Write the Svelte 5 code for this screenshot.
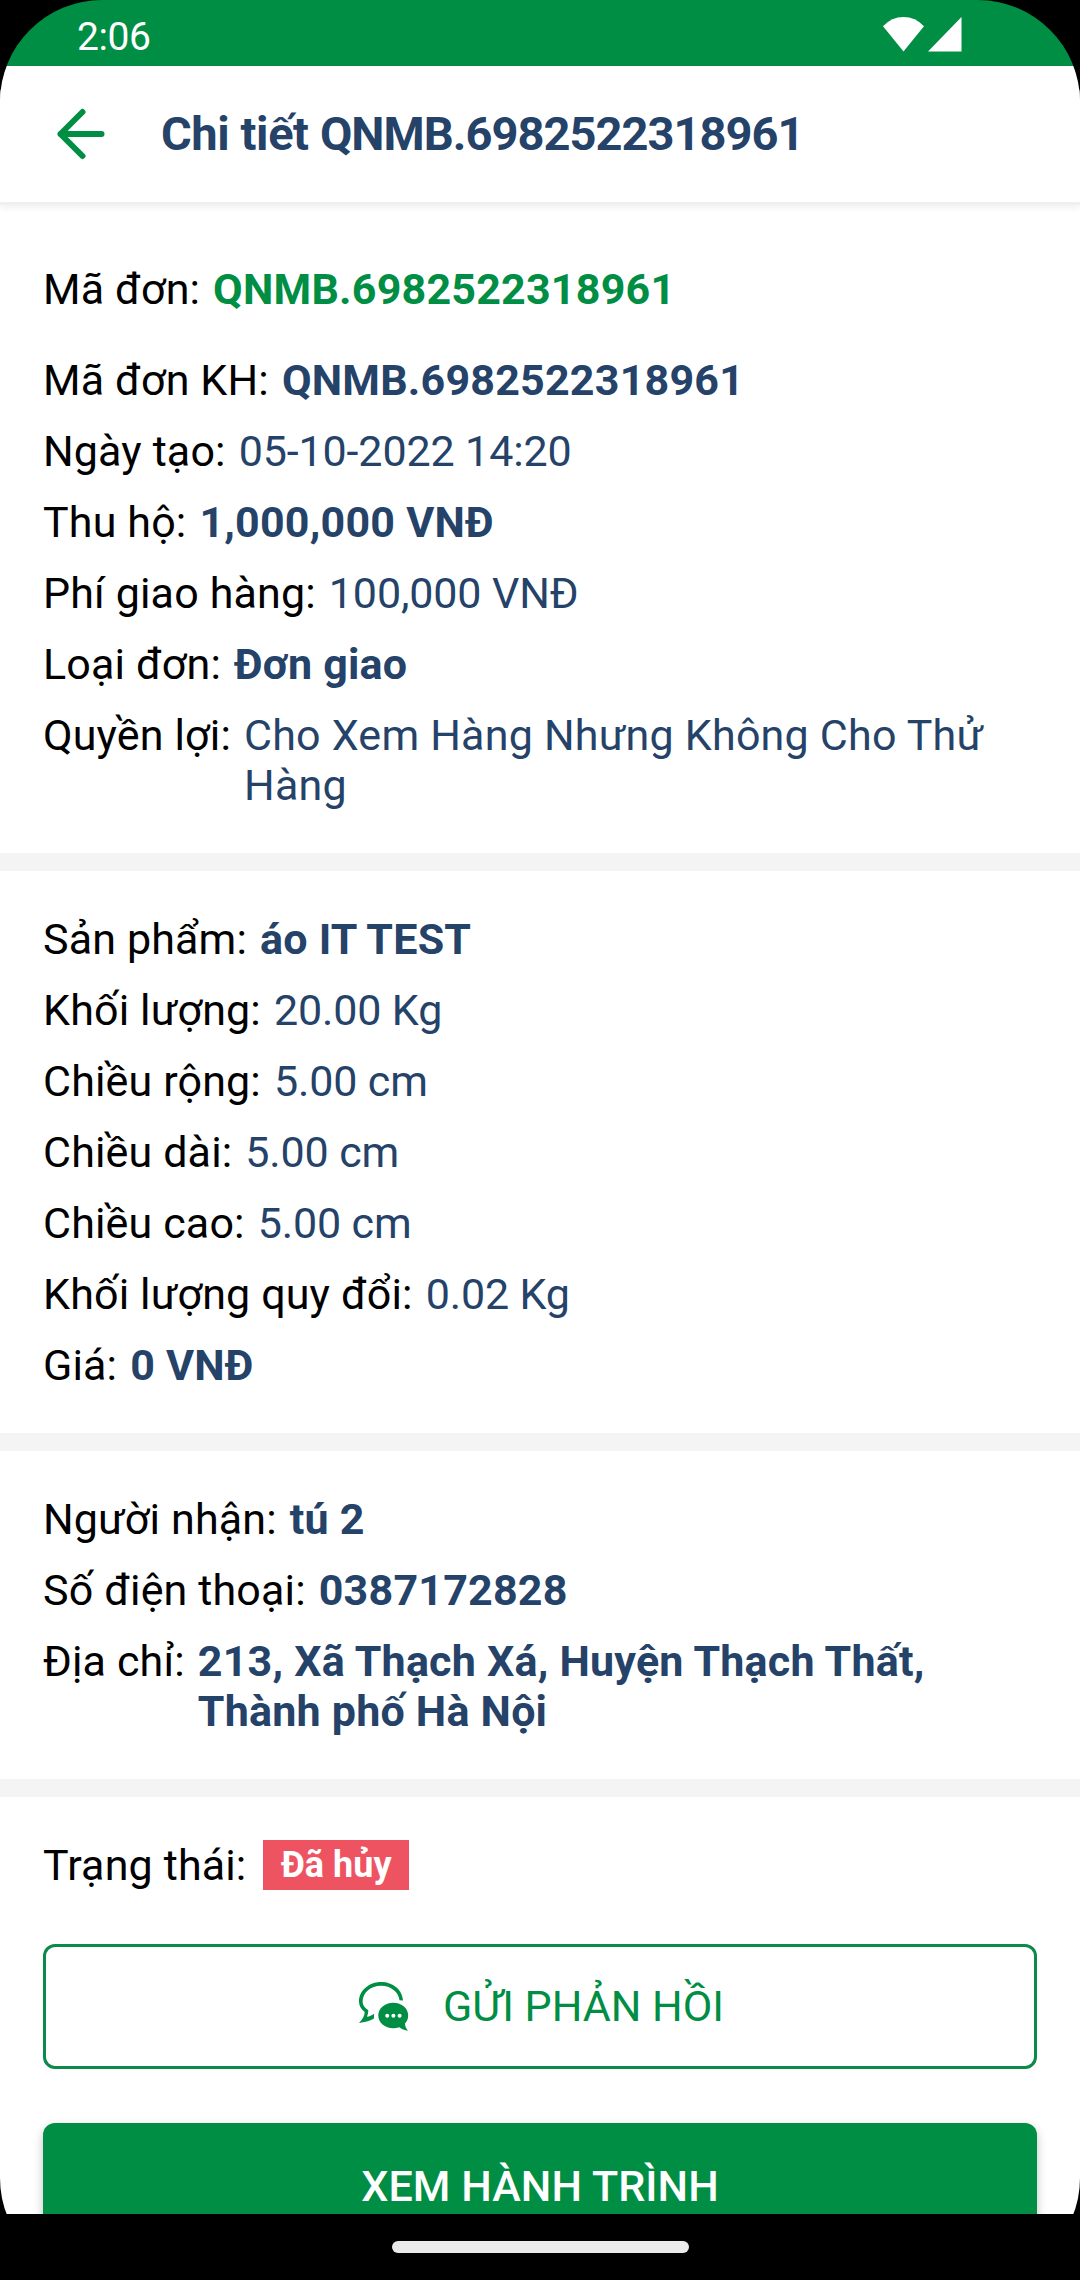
<script>
  const code = 'QNMB.6982522318961';

  const sections = [
    [
      { label: 'Mã đơn:', value: code, bold: true, lead: true },
      { label: 'Mã đơn KH:', value: code, bold: true },
      { label: 'Ngày tạo:', value: '05-10-2022 14:20', numeric: true },
      { label: 'Thu hộ:', value: '1,000,000 VNĐ', bold: true },
      { label: 'Phí giao hàng:', value: '100,000 VNĐ', numeric: true },
      { label: 'Loại đơn:', value: 'Đơn giao', bold: true },
      { label: 'Quyền lợi:', value: 'Cho Xem Hàng Nhưng Không Cho Thử Hàng' }
    ],
    [
      { label: 'Sản phẩm:', value: 'áo IT TEST', bold: true },
      { label: 'Khối lượng:', value: '20.00 Kg', numeric: true },
      { label: 'Chiều rộng:', value: '5.00 cm', numeric: true },
      { label: 'Chiều dài:', value: '5.00 cm', numeric: true },
      { label: 'Chiều cao:', value: '5.00 cm', numeric: true },
      { label: 'Khối lượng quy đổi:', value: '0.02 Kg', numeric: true },
      { label: 'Giá:', value: '0 VNĐ', bold: true }
    ],
    [
      { label: 'Người nhận:', value: 'tú 2', bold: true },
      { label: 'Số điện thoại:', value: '0387172828', bold: true },
      { label: 'Địa chỉ:', value: '213, Xã Thạch Xá, Huyện Thạch Thất, Thành phố Hà Nội', bold: true }
    ]
  ];
</script>

<div class="device">
  <div class="screen">
    <div class="status">
      <span class="clock">2:06</span>
      <svg class="signals" width="79" height="36" viewBox="0 0 79 36" fill="#fff">
        <path d="M0 10.2Q8.6 1 20.5 1Q32.4 1 41 10.2L20.5 35.5Z" />
        <path d="M78.5 1V35.5H45Z" />
      </svg>
    </div>

    <header>
      <button class="back" aria-label="Quay lại">
        <svg width="48" height="52" viewBox="0 0 48 52" fill="none" stroke="#008e44" stroke-width="6" stroke-linecap="round" stroke-linejoin="round">
          <path d="M25.5 4L3.5 26L25.5 48M3.5 26H44.5" />
        </svg>
      </button>
      <h1>Chi tiết <span class="code">{code}</span></h1>
    </header>

    <main>
      {#each sections as rows, i}
        <section class:first={i === 0}>
          {#each rows as row}
            <div class="row" class:lead={row.lead}>
              <span class="label">{row.label}</span>
              <span class="value" class:bold={row.bold} class:numeric={row.numeric}>{row.value}</span>
            </div>
          {/each}
        </section>
      {/each}

      <section class="last">
        <div class="row state">
          <span class="label">Trạng thái:</span>
          <span class="badge">Đã hủy</span>
        </div>
        <button class="btn outline">
          <svg class="chat" width="50" height="50" viewBox="0 0 50 50" fill="#008e44">
            <path d="M44 18.500C43.500 8 34 0 22 0C10 0 0 8.500 0 19.500C0 23.500 2 27 5.700 30C5.500 34 3.500 37.500 0 41C5.500 40.300 10.500 39 15 36.500V31.700C12.500 33.500 10.500 34.300 8 34.800C8.800 32.500 9.300 30.500 9.300 28.300C5.500 25.800 3.600 23 3.600 19.500C3.600 10.500 12 3.800 22 3.800C32 3.800 39.500 10 40.500 18.300Z" />
            <path d="M34.300 20.700C42.800 20.700 49.200 26.300 49.200 33.500C49.200 36.800 48 39.500 46 41.500C46 44.300 47 46.500 49 48.800C45.500 48.400 42.500 47.300 40.300 45.300C38.500 45.900 36.300 46.200 34.300 46.200C25.800 46.200 19.300 40.700 19.300 33.500C19.300 26.300 25.800 20.700 34.300 20.700Z" />
            <g fill="#fff">
              <circle cx="28.200" cy="33.700" r="2" />
              <circle cx="34.400" cy="33.700" r="2" />
              <circle cx="40.600" cy="33.700" r="2" />
            </g>
          </svg>
          <span>GỬI PHẢN HỒI</span>
        </button>
        <button class="btn solid">XEM HÀNH TRÌNH</button>
      </section>
    </main>

    <nav><i class="handle"></i></nav>
  </div>
</div>

<style>
  :global(body) {
    background: #000;
  }

  .device {
    width: 1080px;
    height: 2280px;
    background: #000;
    font-family: Roboto, sans-serif;
    font-size: 43px;
    line-height: 50px;
    color: #000;
  }

  .screen {
    display: flex;
    flex-direction: column;
    height: 100%;
    overflow: hidden;
    border-radius: 102px;
  }

  .status {
    flex: none;
    display: flex;
    justify-content: space-between;
    box-sizing: border-box;
    height: 66px;
    padding: 16px 118px 0 77px;
    background: #008e44;
  }

  .clock {
    font-size: 39px;
    line-height: 42px;
    letter-spacing: -0.4px;
    color: #fff;
  }

  header {
    flex: none;
    display: flex;
    align-items: center;
    z-index: 1;
    height: 136px;
    padding-left: 57px;
    background: #fff;
    box-shadow: 0 3px 0 #f0f0f0, 0 6px 7px rgba(0, 0, 0, 0.06);
  }

  button {
    margin: 0;
    padding: 0;
    border: 0;
    background: none;
    font: inherit;
  }

  .back {
    width: 104px;
    text-align: left;
  }

  svg {
    display: block;
  }

  h1 {
    margin: 0;
    font-size: 47px;
    line-height: 56px;
    font-weight: 700;
    letter-spacing: -0.4px;
    color: #254269;
  }

  .code {
    letter-spacing: -0.96px;
  }

  main {
    flex: 1;
    min-height: 0;
    overflow: hidden;
    background: #fff;
  }

  section {
    display: flex;
    flex-direction: column;
    gap: 21px;
    padding: 43px;
    border-bottom: 18px solid #f4f4f4;
  }

  .first {
    padding-top: 62px;
  }

  .last {
    gap: 54px;
    border: 0;
  }

  .row {
    display: flex;
    gap: 13px;
  }

  .lead {
    margin-bottom: 20px;
  }

  .label {
    flex: none;
    letter-spacing: 0.15px;
  }

  .value {
    color: #254269;
    letter-spacing: 0.22px;
  }

  .numeric {
    letter-spacing: -0.12px;
  }

  .bold {
    font-weight: 700;
  }

  .lead .value {
    color: #008e44;
  }

  .state {
    gap: 17px;
  }

  .badge {
    padding: 0 17.5px;
    background: #ee5362;
    color: #fff;
    font-size: 36px;
    font-weight: 700;
  }

  .btn {
    flex: none;
    display: flex;
    align-items: center;
    justify-content: center;
    box-sizing: border-box;
    height: 125px;
    border-radius: 12px;
  }

  .outline {
    gap: 34px;
    padding: 0 0 1px 3px;
    border: 3px solid #0b8a4b;
    color: #008e44;
  }

  .chat {
    margin-top: 2px;
  }

  .solid {
    background: #008e44;
    color: #fff;
    font-weight: 500;
    letter-spacing: 0.1px;
    box-shadow: 0 4px 10px rgba(0, 0, 0, 0.25);
  }

  nav {
    flex: none;
    display: flex;
    justify-content: center;
    box-sizing: border-box;
    height: 66px;
    padding-top: 27px;
    background: #000;
  }

  .handle {
    width: 297px;
    height: 12px;
    border-radius: 6px;
    background: #ebebeb;
  }
</style>
